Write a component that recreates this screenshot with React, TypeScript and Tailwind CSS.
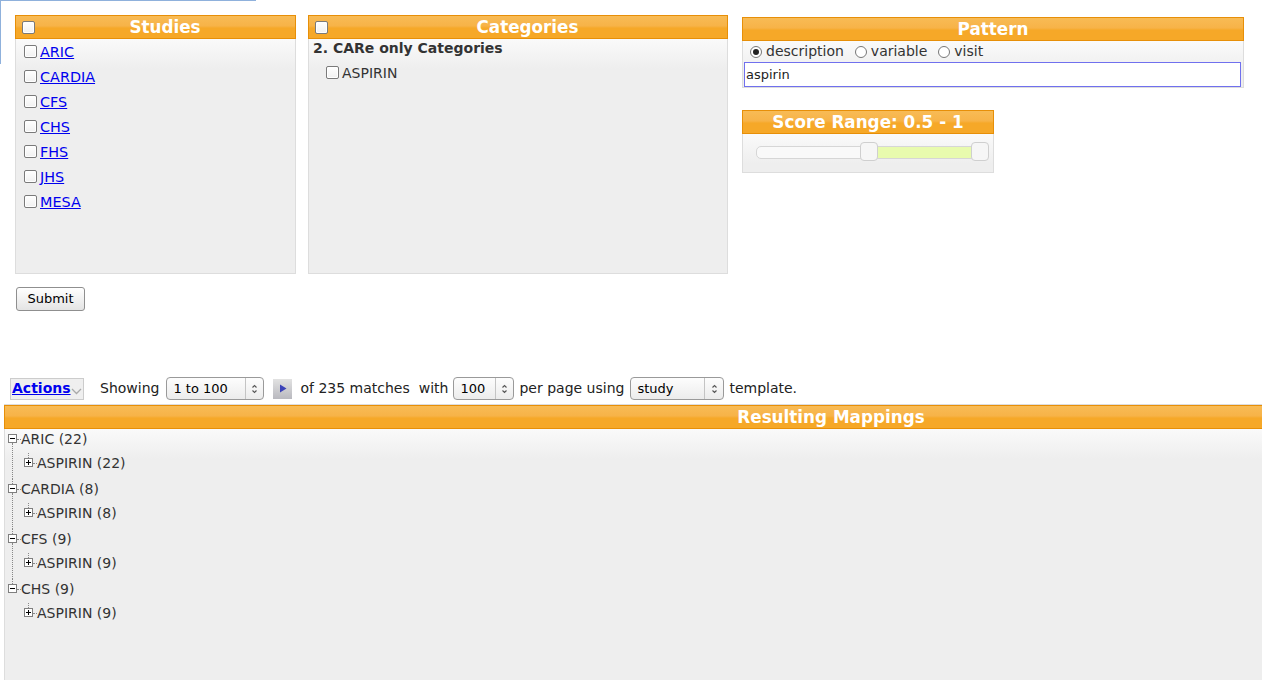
import { ReactNode } from "react";

const headerBg =
  "bg-[linear-gradient(to_bottom,#f8bb55,#f7b348_45%,#f6a828_55%,#f6a828)]";
const bodyBg = "bg-[linear-gradient(to_bottom,#fafafa,#eeeeee_30px)]";

const CheckBox = () => (
  <span className="inline-block w-[13px] h-[13px] shrink-0 rounded-[2px] border border-[#7a7a7a] bg-[linear-gradient(to_bottom,#fff,#f1f1f1)] shadow-[inset_0_0_0_1px_#fff]" />
);

const Radio = ({ checked }: { checked?: boolean }) => (
  <span className="inline-flex items-center justify-center w-[12px] h-[12px] shrink-0 rounded-full border border-[#777] bg-white">
    {checked && <span className="w-[6px] h-[6px] rounded-full bg-[#222]" />}
  </span>
);

const Panel = ({
  title,
  check,
  className,
  bodyClass,
  children,
}: {
  title: string;
  check?: boolean;
  className?: string;
  bodyClass?: string;
  children?: ReactNode;
}) => (
  <div className={"flex flex-col " + (className ?? "")}>
    <div
      className={
        "h-[24px] shrink-0 flex items-center border border-[#e78f08] text-white font-bold text-[16.8px] " +
        headerBg
      }
    >
      {check && (
        <span className="ml-[6px] flex">
          <CheckBox />
        </span>
      )}
      <span className="flex-1 text-center leading-none">{title}</span>
    </div>
    <div
      className={
        "flex-1 border border-t-0 border-[#dddddd] " + bodyBg + " " + (bodyClass ?? "")
      }
    >
      {children}
    </div>
  </div>
);

const UpDown = () => (
  <svg width="7" height="10" viewBox="0 0 7 10" fill="none" stroke="#555" strokeWidth="1.1">
    <path d="M1.5 3.5 L3.5 1.5 L5.5 3.5" />
    <path d="M1.5 6.5 L3.5 8.5 L5.5 6.5" />
  </svg>
);

const Select = ({ value, w, div }: { value: string; w: string; div: string }) => (
  <div
    className={
      "h-[23px] flex items-center rounded-[4px] border border-[#9a9a9a] bg-[linear-gradient(to_bottom,#fdfdfd,#ececec)] text-[13px] text-black " +
      w
    }
  >
    <span className="flex-1 pl-[6px]">{value}</span>
    <span className={"h-full flex items-center justify-center border-l border-[#c4c4c4] " + div}>
      <UpDown />
    </span>
  </div>
);

const TreeBox = ({ plus }: { plus?: boolean }) => (
  <span className="relative flex items-center justify-center w-[9px] h-[9px] shrink-0 border border-[#7f7f7f] bg-white">
    <span className="w-[5px] h-[1px] bg-black" />
    {plus && <span className="absolute w-[1px] h-[5px] bg-black" />}
  </span>
);

const groups = [
  { name: "ARIC (22)", child: "ASPIRIN (22)" },
  { name: "CARDIA (8)", child: "ASPIRIN (8)" },
  { name: "CFS (9)", child: "ASPIRIN (9)" },
  { name: "CHS (9)", child: "ASPIRIN (9)" },
];

const studies = ["ARIC", "CARDIA", "CFS", "CHS", "FHS", "JHS", "MESA"];

export default function App() {
  return (
    <div
      className="relative w-[1262px] h-[680px] overflow-hidden bg-white text-[#333] text-[14px] flex flex-col"
      style={{ fontFamily: '"DejaVu Sans", Verdana, sans-serif' }}
    >
      <div className="absolute top-0 left-0 w-[256px] h-[64px] border-t border-l border-[#8fb1dc] pointer-events-none" />

      <div className="flex items-start pt-[15px] pl-[15px]">
        <Panel title="Studies" check className="w-[281px] h-[259px]" bodyClass="pt-[1px] pl-[8px]">
          {studies.map((s) => (
            <div key={s} className="h-[25px] flex items-center">
              <span className="flex -mt-[2px]">
                <CheckBox />
              </span>
              <a href="#" className="ml-[3px] text-[#0000ee] underline text-[14.4px]">
                {s}
              </a>
            </div>
          ))}
        </Panel>

        <Panel title="Categories" check className="ml-[12px] w-[420px] h-[259px]" bodyClass="pl-[4px]">
          <div className="h-[18px] flex items-center font-bold">2. CARe only Categories</div>
          <div className="h-[32px] flex items-center pl-[13px]">
            <span className="flex -mt-[2px]">
              <CheckBox />
            </span>
            <span className="ml-[3px]">ASPIRIN</span>
          </div>
        </Panel>

        <div className="ml-[14px] mt-[2px] flex flex-col">
          <Panel title="Pattern" className="w-[502px]" bodyClass="pl-[1px] pr-[2px]">
            <div className="h-[21px] flex items-center pl-[6px]">
              <Radio checked />
              <span className="ml-[4px]">description</span>
              <span className="ml-[11px] flex">
                <Radio />
              </span>
              <span className="ml-[4px]">variable</span>
              <span className="ml-[11px] flex">
                <Radio />
              </span>
              <span className="ml-[4px]">visit</span>
            </div>
            <div className="h-[25px] border border-[#7070ee] bg-white flex items-center pl-[1px] text-[13px] text-[#222]">
              aspirin
            </div>
          </Panel>

          <Panel title="Score Range: 0.5 - 1" className="mt-[22px] w-[252px] h-[63px]" bodyClass="pt-[12px] pl-[13px]">
            <div className="relative w-[224px] h-[13px] rounded-[5px] border border-[#d6d6d6] bg-[#f9f9f9]">
              <div className="absolute left-[111px] right-0 top-0 bottom-0 bg-[#e8fbae]" />
              <div className="absolute left-[103px] -top-[5px] w-[18px] h-[19px] rounded-[4px] border border-[#cfcfcf] bg-[#f6f6f6]" />
              <div className="absolute left-[214px] -top-[5px] w-[18px] h-[19px] rounded-[4px] border border-[#cfcfcf] bg-[#f6f6f6]" />
            </div>
          </Panel>
        </div>
      </div>

      <div className="mt-[13px] ml-[16px]">
        <button className="w-[69px] h-[24px] rounded-[3px] border border-[#8f8f8f] bg-[linear-gradient(to_bottom,#ffffff,#e4e4e4)] text-[13px] text-black">
          Submit
        </button>
      </div>

      <div className="mt-[66px] h-[23px] shrink-0 flex items-center text-[14px] text-[#222]">
        <div className="ml-[10px] h-[22px] w-[74px] flex items-center border border-[#cccccc] bg-[#efefef] pl-[1px]">
          <a href="#" className="font-bold text-[#0000ee] underline">
            Actions
          </a>
          <svg width="11" height="7" viewBox="0 0 11 7" className="mt-[5px]" fill="none" stroke="#aaa" strokeWidth="1.3">
            <path d="M1 1 L5.5 5.5 L10 1" />
          </svg>
        </div>
        <span className="ml-[16px]">Showing</span>
        <div className="ml-[7px]">
          <Select value="1 to 100" w="w-[98px]" div="w-[18px]" />
        </div>
        <div className="ml-[9px] w-[19px] h-[20px] flex items-center justify-center bg-[linear-gradient(to_bottom,#e2e2e2,#b9b9bf)]">
          <svg width="8" height="9" viewBox="0 0 8 9">
            <path d="M1 0.5 L7.5 4.5 L1 8.5 Z" fill="#3c43b8" />
          </svg>
        </div>
        <span className="ml-[8px]">of 235 matches</span>
        <span className="ml-[9px]">with</span>
        <div className="ml-[5px]">
          <Select value="100" w="w-[61px]" div="w-[18px]" />
        </div>
        <span className="ml-[5px]">per page using</span>
        <div className="ml-[6px]">
          <Select value="study" w="w-[94px]" div="w-[19px]" />
        </div>
        <span className="ml-[5px]">template.</span>
      </div>

      <div className="mt-[4px] ml-[4px] w-[1654px] h-[400px] shrink-0 flex flex-col border-t border-[#dddddd]">
        <Panel title="Resulting Mappings" className="flex-1">
          {groups.map((g, i) => (
            <div key={i} className="flex">
              <div className="ml-[3px] w-[9px] flex flex-col items-center">
                <div className={"h-[5px] " + (i > 0 ? "border-l border-dotted border-[#888]" : "")} />
                <TreeBox />
                {i < groups.length - 1 && <div className="flex-1 border-l border-dotted border-[#888]" />}
              </div>
              <div className="flex flex-col text-[14px] text-[#333]">
                <div className="h-[20px] flex items-center">
                  <span className="w-[4px] border-t border-dotted border-[#888]" />
                  <span>{g.name}</span>
                </div>
                <div className="mt-[4px] mb-[6px] h-[20px] flex ml-[7px]">
                  <div className="w-[9px] flex flex-col items-center">
                    <div className="h-[5px] border-l border-dotted border-[#888]" />
                    <TreeBox plus />
                  </div>
                  <div className="h-[20px] flex items-center">
                    <span className="w-[4px] border-t border-dotted border-[#888]" />
                    <span>{g.child}</span>
                  </div>
                </div>
              </div>
            </div>
          ))}
        </Panel>
      </div>
    </div>
  );
}
